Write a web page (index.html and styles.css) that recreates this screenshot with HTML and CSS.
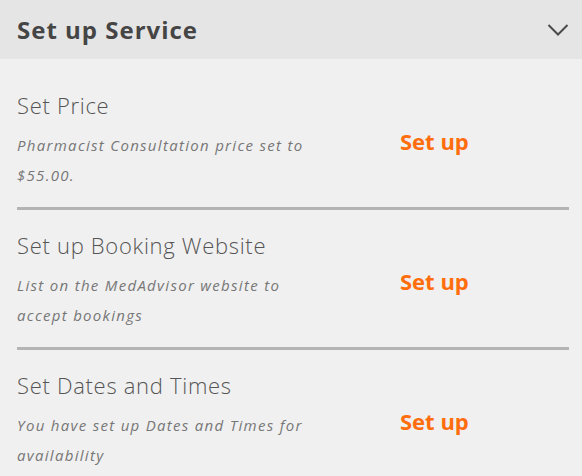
FILE: index.html
```html
<!DOCTYPE html>
<html lang="en">
<head>
  <meta charset="UTF-8" />
  <meta name="viewport" content="width=device-width, initial-scale=1.0"/>
  <title>Set up Service</title>
  <link rel="stylesheet" href="styles.css">
</head>
<body>
  <div class="panel">
    <div class="panel-head">
      <h2>Set up Service</h2>
      <svg class="chevron" width="22" height="14" viewBox="0 0 22 14">
        <path d="M1.5 2 L11 11.5 L20.5 2" fill="none" stroke="#4a4a4a" stroke-width="2"/>
      </svg>
    </div>
    <div class="panel-body">
      <div class="step">
        <div class="step-text">
          <h3>Set Price</h3>
          <p>Pharmacist Consultation price set to<br>$55.00.</p>
        </div>
        <a class="step-action" href="#">Set up</a>
      </div>
      <div class="step">
        <div class="step-text">
          <h3>Set up Booking Website</h3>
          <p>List on the MedAdvisor website to<br>accept bookings</p>
        </div>
        <a class="step-action" href="#">Set up</a>
      </div>
      <div class="step">
        <div class="step-text">
          <h3>Set Dates and Times</h3>
          <p>You have set up Dates and Times for<br>availability</p>
        </div>
        <a class="step-action" href="#">Set up</a>
      </div>
    </div>
  </div>
</body>
</html>
```

FILE: styles.css
```css
body {
  margin: 0;
  font-family: 'Open Sans', 'Lato', sans-serif;
  background: #f0f0f0;
  color: #555;
}
.panel-head {
  height: 59px;
  background: #e5e5e5;
  display: flex;
  align-items: center;
  justify-content: space-between;
  padding: 0 13px 0 17px;
}
.panel-head h2 {
  margin: 0;
  font-size: 24px;
  font-weight: 700;
  letter-spacing: 1px;
  color: #454545;
}
.chevron {
  margin-top: 1px;
}
.panel-body {
  padding: 11px 13px 0 17px;
}
.step {
  display: flex;
  align-items: center;
  padding: 22px 0 17px;
  border-bottom: 3px solid #b4b4b4;
}
.step:last-child {
  border-bottom: none;
}
.step-text {
  width: 383px;
}
.step h3 {
  margin: 0;
  font-size: 22px;
  font-weight: 300;
  letter-spacing: 0.7px;
  color: #555;
  line-height: 26px;
}
.step p {
  margin: 12px 0 0;
  font-size: 15px;
  font-style: italic;
  letter-spacing: 1.3px;
  color: #777;
  line-height: 30px;
}
.step-action {
  font-size: 22px;
  font-weight: 700;
  color: #ff6d0d;
  text-decoration: none;
}
```
